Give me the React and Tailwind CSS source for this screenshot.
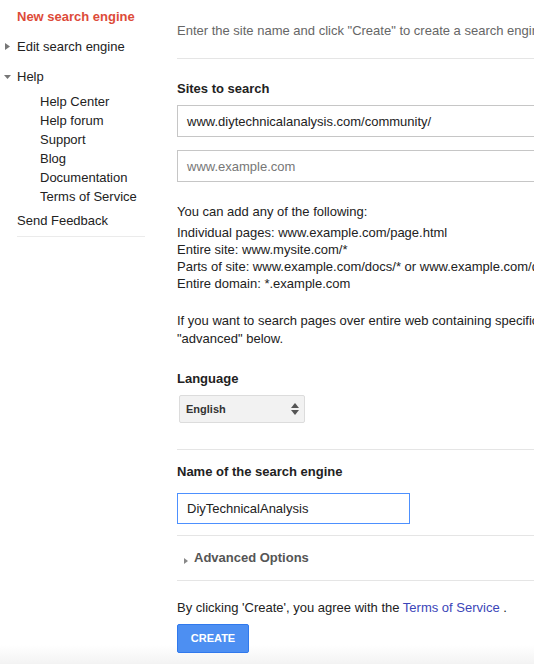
import React from 'react';

const helpLinks = ['Help Center', 'Help forum', 'Support', 'Blog', 'Documentation', 'Terms of Service'];

const examples = [
  'Individual pages: www.example.com/page.html',
  'Entire site: www.mysite.com/*',
  'Parts of site: www.example.com/docs/* or www.example.com/docs/*',
  'Entire domain: *.example.com',
];

const RightTri = ({ className = '' }) => (
  <svg width="5" height="7" viewBox="0 0 5 7" className={className}>
    <path d="M0 0 L5 3.5 L0 7 Z" fill="#777" />
  </svg>
);

const DownTri = () => (
  <svg width="7" height="4" viewBox="0 0 7 4">
    <path d="M0 0 L7 0 L3.5 4 Z" fill="#777" />
  </svg>
);

const Sidebar = () => (
  <div className="w-[145px] shrink-0 text-[13px] leading-[19px] text-[#222]">
    <div className="mt-[7px] pl-[17px] font-bold text-[#dd4b39]">New search engine</div>
    <div className="mt-[11px] flex items-center">
      <span className="w-[17px] pl-[5px] flex items-center"><RightTri /></span>
      <span>Edit search engine</span>
    </div>
    <div className="mt-[11px] flex items-center">
      <span className="w-[17px] pl-[4px] flex items-center"><DownTri /></span>
      <span>Help</span>
    </div>
    <ul className="mt-[6px] pl-[40px]">
      {helpLinks.map((l) => (
        <li key={l}>{l}</li>
      ))}
    </ul>
    <div className="mt-[5px] pl-[17px]">Send Feedback</div>
    <div className="mt-[6px] ml-[17px] border-t border-[#ebebeb]" />
  </div>
);

const Divider = ({ className = '' }) => <div className={`border-t border-[#e5e5e5] ${className}`} />;

const Main = () => (
  <div className="ml-[32px] w-[520px] shrink-0 text-[13px] leading-[19px] text-[#222]">
    <p className="pt-[21px] text-[#666] whitespace-nowrap">
      Enter the site name and click "Create" to create a search engine for your site.
    </p>
    <Divider className="mt-[18px]" />

    <div className="mt-[20px] font-bold">Sites to search</div>
    <div className="mt-[7px] h-[32px] border border-[#c6c6c6] pl-[9px] flex items-center">
      www.diytechnicalanalysis.com/community/
    </div>
    <div className="mt-[13px] h-[32px] border border-[#c6c6c6] pl-[9px] flex items-center text-[#777]">
      www.example.com
    </div>

    <p className="mt-[20px]">You can add any of the following:</p>
    <div className="mt-[3px] leading-[17px] whitespace-nowrap">
      {examples.map((e) => (
        <div key={e}>{e}</div>
      ))}
    </div>
    <p className="mt-[20px] leading-[18px] whitespace-nowrap">
      If you want to search pages over entire web containing specific keywords, click
      <br />
      "advanced" below.
    </p>

    <div className="mt-[21px] font-bold">Language</div>
    <div className="mt-[7px] ml-[2px] w-[126px] h-[28px] rounded-[2px] border border-[#dcdcdc] bg-[#f2f2f2] flex items-center justify-between pl-[6px] pr-[5px] text-[11px] font-bold text-[#333]">
      <span>English</span>
      <svg width="8" height="12" viewBox="0 0 8 12">
        <path d="M0 5 L4 0 L8 5 Z" fill="#555" />
        <path d="M0 7 L8 7 L4 12 Z" fill="#555" />
      </svg>
    </div>
    <Divider className="mt-[26px]" />

    <div className="mt-[12px] font-bold">Name of the search engine</div>
    <div className="mt-[12px] w-[233px] h-[31px] border border-[#4d90fe] pl-[9px] flex items-center">
      DiyTechnicalAnalysis
    </div>
    <Divider className="mt-[11px]" />

    <div className="mt-[12px] flex items-center font-bold text-[#555]">
      <span className="w-[17px] pl-[7px] pt-[6px] flex items-center">
        <svg width="4" height="6" viewBox="0 0 4 6">
          <path d="M0 0 L4 3 L0 6 Z" fill="#888" />
        </svg>
      </span>
      <span>Advanced Options</span>
    </div>
    <Divider className="mt-[13px]" />

    <p className="mt-[17px]">
      By clicking 'Create', you agree with the <span className="text-[#3b45b8]">Terms of Service</span> .
    </p>
    <button className="mt-[7px] w-[72px] h-[29px] rounded-[2px] border border-[#3079ed] bg-[#4d8ff2] text-white text-[11px] font-bold flex items-center justify-center">
      CREATE
    </button>
  </div>
);

export default function App() {
  return (
    <div
      className="w-[534px] h-[664px] overflow-hidden flex items-start bg-[linear-gradient(to_bottom,#ffffff_645px,#f3f3f3_664px)]"
      style={{ fontFamily: '"Liberation Sans", Arial, sans-serif' }}
    >
      <Sidebar />
      <Main />
    </div>
  );
}
